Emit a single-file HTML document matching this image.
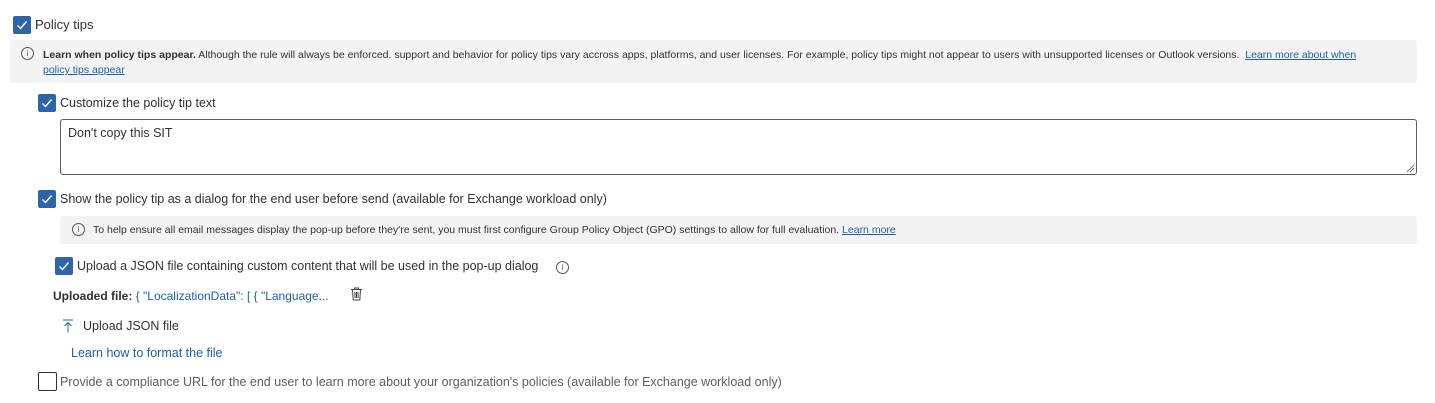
<!DOCTYPE html>
<html><head><meta charset="utf-8"><style>
*{box-sizing:border-box;margin:0;padding:0}
body{width:1435px;height:403px;background:#fff;font-family:"Liberation Sans",sans-serif;color:#323130;position:relative;overflow:hidden}
.a{position:absolute;white-space:nowrap}
.cb{position:absolute;width:18px;height:18px;background:#2f64a8;border-radius:2px}
.cb svg{position:absolute;left:2px;top:2px}
.cbe{position:absolute;width:19px;height:19px;border:1px solid #323130;border-radius:2px;background:#fff}
.t13{font-size:12.5px}
.t11{font-size:10.5px}
a{color:#1f5fa8}
.box{position:absolute;background:#f3f3f3;border-radius:3px}
.ic{position:absolute;width:13px;height:13px;border:1px solid #555;border-radius:50%;font-size:8px;line-height:11px;text-align:center;color:#555}
</style></head><body>
<div class="cb" style="left:13px;top:16px"><svg width="14" height="14" viewBox="0 0 14 14"><path d="M2.5 7.5l3 3 6-7" stroke="#fff" stroke-width="1.4" fill="none"/></svg></div>
<div class="a" style="left:35px;top:17px;font-size:13px">Policy tips</div>

<div class="box" style="left:10px;top:40px;width:1407px;height:43px"></div>
<div class="ic" style="left:21px;top:47px">i</div>
<div class="a t11" style="left:43px;top:48px;line-height:15px;white-space:normal;width:1328px"><b>Learn when policy tips appear.</b> Although the rule will always be enforced. support and behavior for policy tips vary accross apps, platforms, and user licenses. For example, policy tips might not appear to users with unsupported licenses or Outlook versions. &nbsp;<a href="#">Learn more about when policy tips appear</a></div>

<div class="cb" style="left:38px;top:94px"><svg width="14" height="14" viewBox="0 0 14 14"><path d="M2.5 7.5l3 3 6-7" stroke="#fff" stroke-width="1.4" fill="none"/></svg></div>
<div class="a t13" style="left:60px;top:96px">Customize the policy tip text</div>
<div style="position:absolute;left:60px;top:119px;width:1357px;height:56px;border:1px solid #605e5c;border-radius:3px"></div>
<div class="a t13" style="left:68px;top:126px">Don't copy this SIT</div>
<svg class="a" style="left:1406px;top:164px" width="9" height="9"><path d="M1 8L8 1M4 8L8 4" stroke="#777" stroke-width="1"/></svg>

<div class="cb" style="left:38px;top:190px"><svg width="14" height="14" viewBox="0 0 14 14"><path d="M2.5 7.5l3 3 6-7" stroke="#fff" stroke-width="1.4" fill="none"/></svg></div>
<div class="a t13" style="left:60px;top:192px">Show the policy tip as a dialog for the end user before send (available for Exchange workload only)</div>

<div class="box" style="left:60px;top:216px;width:1357px;height:28px"></div>
<div class="ic" style="left:72px;top:223px">i</div>
<div class="a t11" style="left:93px;top:224px">To help ensure all email messages display the pop-up before they're sent, you must first configure Group Policy Object (GPO) settings to allow for full evaluation. <a href="#">Learn more</a></div>

<div class="cb" style="left:55px;top:257px"><svg width="14" height="14" viewBox="0 0 14 14"><path d="M2.5 7.5l3 3 6-7" stroke="#fff" stroke-width="1.4" fill="none"/></svg></div>
<div class="a t13" style="left:77px;top:259px">Upload a JSON file containing custom content that will be used in the pop-up dialog</div>
<div class="ic" style="left:556px;top:261px">i</div>

<div class="a" style="left:53px;top:289px;font-size:12px"><b>Uploaded file:</b> <span style="color:#1f5fa8">{ "LocalizationData": [ { "Language...</span></div>
<svg class="a" style="left:350px;top:287px" width="13" height="14" viewBox="0 0 13 14"><path d="M1 2.5h11M4.5 2.5V1h4v1.5M2.5 2.5l.7 10.5h6.6l.7-10.5M5 5v6M6.5 5v6M8 5v6" stroke="#444" fill="none" stroke-width="1"/></svg>

<svg class="a" style="left:62px;top:319px" width="12" height="14" viewBox="0 0 12 14"><path d="M1 1h10M6 3.5v10M2.5 7L6 3.5 9.5 7" stroke="#2f64a8" fill="none" stroke-width="1"/></svg>
<div class="a" style="left:83px;top:319px;font-size:12.5px">Upload JSON file</div>
<div class="a" style="left:71px;top:346px;font-size:12.5px;color:#1f5fa8">Learn how to format the file</div>

<div class="cbe" style="left:38px;top:372px"></div>
<div class="a" style="left:60px;top:375px;color:#605e5c;font-size:12.5px">Provide a compliance URL for the end user to learn more about your organization's policies (available for Exchange workload only)</div>
</body></html>
